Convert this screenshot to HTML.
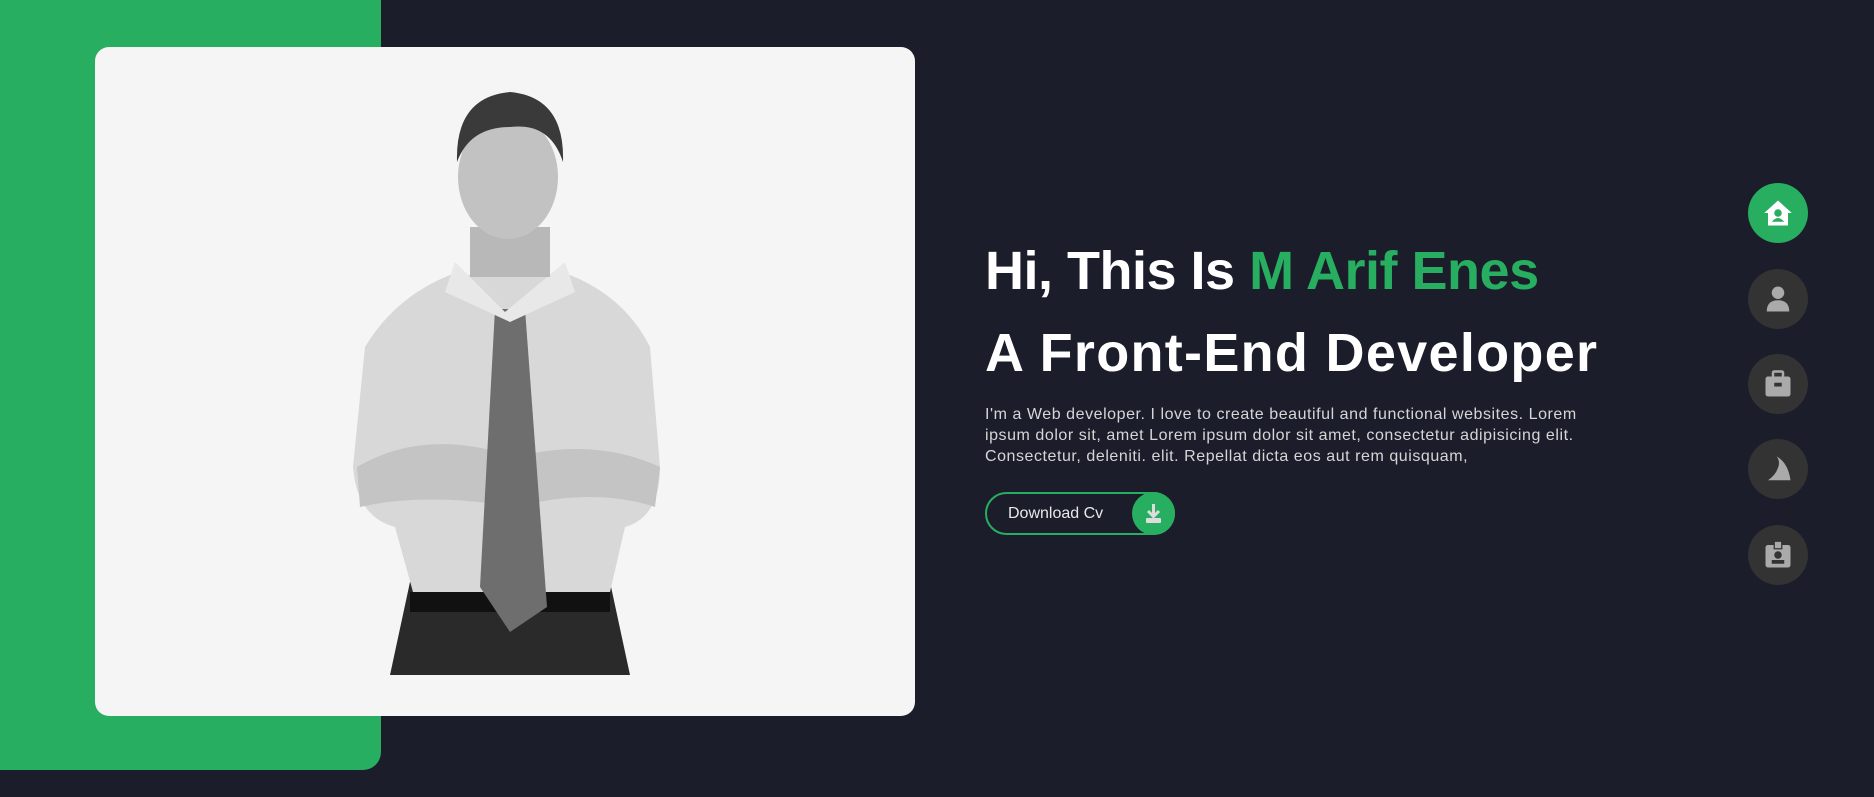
<!DOCTYPE html>
<html><head><meta charset="utf-8"><style>
*{margin:0;padding:0;box-sizing:border-box}
body{width:1874px;height:797px;background:#1b1d2b;position:relative;overflow:hidden;font-family:"Liberation Sans",sans-serif}
.green{position:absolute;left:0;top:0;width:381px;height:770px;background:#27ae60;border-radius:0 0 18px 0}
.card{position:absolute;left:95px;top:47px;width:820px;height:669px;background:#f5f5f5;border-radius:14px;overflow:hidden}
h1{position:absolute;left:985px;color:#fff;font-weight:bold;font-size:54px;white-space:nowrap;letter-spacing:-0.5px}
h1 span{color:#27ae60}
p{position:absolute;left:985px;top:404px;width:610px;color:#d6d6d6;font-size:16px;line-height:21px;letter-spacing:0.55px}
.btn{position:absolute;left:985px;top:492px;width:190px;height:43px;border:2px solid #27ae60;border-radius:22px;color:#e8e8e8;font-size:16px;line-height:39px;padding-left:21px}
.btn .c{position:absolute;right:-2px;top:-2px;width:43px;height:43px;border-radius:50%;background:#27ae60}
.nav{position:absolute;left:1748px;width:60px;height:60px;border-radius:50%;background:#333}
.nav svg{position:absolute;left:15px;top:15px}
</style></head><body>
<div class="green"></div>
<div class="card">
<svg width="820" height="669" viewBox="0 0 820 669">
 <path d="M315 535 L515 535 L535 628 L295 628 Z" fill="#2a2a2a"/>
 <rect x="315" y="545" width="200" height="20" fill="#111"/>
 <path d="M355 228 Q300 250 270 300 L258 420 Q262 470 300 480 L318 545 L515 545 L530 480 Q565 470 565 420 L555 300 Q530 250 475 228 Z" fill="#d8d8d8"/>
 <path d="M262 420 Q330 380 420 410 Q500 390 565 420 L560 460 Q500 440 420 460 Q330 445 265 460 Z" fill="#c4c4c4"/>
 <path d="M400 262 L430 262 L452 560 L415 585 L385 540 Z" fill="#6e6e6e"/>
 <path d="M360 215 L410 265 L470 215 L480 245 L415 275 L350 245 Z" fill="#e8e8e8"/>
 <rect x="375" y="180" width="80" height="50" fill="#b8b8b8"/>
 <ellipse cx="413" cy="130" rx="50" ry="62" fill="#c2c2c2"/>
 <path d="M362 115 Q360 50 415 45 Q470 50 468 115 Q455 75 415 80 Q375 80 362 115 Z" fill="#3a3a3a"/>
</svg>
</div>
<h1 style="top:240px">Hi, This Is <span>M Arif Enes</span></h1>
<h1 style="top:322px;letter-spacing:1.3px">A Front-End Developer</h1>
<p>I'm a Web developer. I love to create beautiful and functional websites. Lorem ipsum dolor sit, amet Lorem ipsum dolor sit amet, consectetur adipisicing elit. Consectetur, deleniti. elit. Repellat dicta eos aut rem quisquam,</p>
<div class="btn">Download Cv<div class="c"><svg width="43" height="43" viewBox="0 0 43 43"><path d="M21.5 12v12M16 19l5.5 5.5L27 19" stroke="#ddd" stroke-width="3" fill="none"/><rect x="14" y="26" width="15" height="5" rx="1" fill="#ddd"/></svg></div></div>
<div class="nav" style="top:183px;background:#27ae60"><svg width="30" height="30" viewBox="0 0 24 24"><path d="M12 2L1 12h3v10h16V12h3z" fill="#fff"/><circle cx="12" cy="12" r="3" fill="#27ae60"/><path d="M7 19q5-6 10 0z" fill="#27ae60"/></svg></div>
<div class="nav" style="top:269px"><svg width="30" height="30" viewBox="0 0 24 24"><circle cx="12" cy="7" r="5" fill="#aaa"/><path d="M3 22q0-9 9-9t9 9z" fill="#aaa"/></svg></div>
<div class="nav" style="top:354px"><svg width="30" height="30" viewBox="0 0 24 24"><rect x="2" y="6" width="20" height="16" rx="2" fill="#aaa"/><rect x="8" y="2" width="8" height="5" rx="1" fill="none" stroke="#aaa" stroke-width="2"/><rect x="9" y="11" width="6" height="3" fill="#333"/></svg></div>
<div class="nav" style="top:439px"><svg width="30" height="30" viewBox="0 0 24 24"><path d="M4 21Q10 17 12 11Q14 6 11 2Q20 7 22 21Z" fill="#aaa"/></svg></div>
<div class="nav" style="top:525px"><svg width="30" height="30" viewBox="0 0 24 24"><rect x="2" y="4" width="20" height="18" rx="2" fill="#aaa"/><rect x="9" y="1" width="6" height="6" fill="#aaa" stroke="#333"/><circle cx="12" cy="12" r="3" fill="#333"/><rect x="7" y="16" width="10" height="3" fill="#333"/></svg></div>
</body></html>
